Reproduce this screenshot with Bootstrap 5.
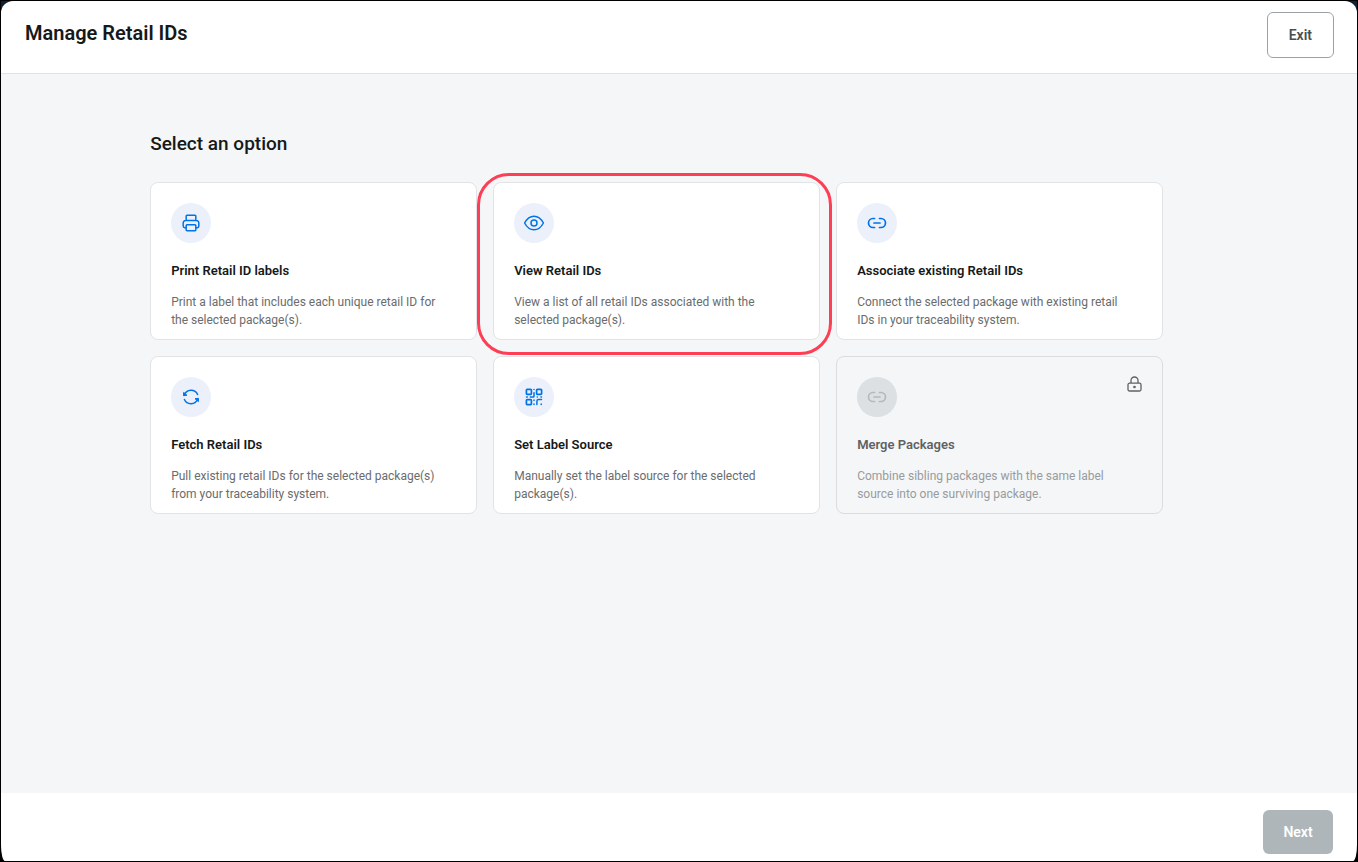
<!DOCTYPE html>
<html lang="en">
<head>
<meta charset="utf-8">
<meta name="viewport" content="width=device-width, initial-scale=1">
<title>Manage Retail IDs</title>
<link href="https://cdn.jsdelivr.net/npm/bootstrap@5.3.0/dist/css/bootstrap.min.css" rel="stylesheet">
<style>
  body { font-family: Roboto, "Liberation Sans", sans-serif; background: #0b2138; color: #161919; }
  .window-frame { border: 1px solid #000; background: linear-gradient(#0b2138 50%, #000 50%); }
  .sheet { background: #fff; border-radius: 12px 12px 4px 4px / 12px 12px 16px 16px; overflow: hidden; }
  .sheet-header { padding: 11px 23px 15px 24px; border-bottom: 1px solid #e0e2e3; }
  .sheet-title { font-size: 20px; font-weight: 600; line-height: 42px; }
  .sheet-body { background: #f4f6f8; padding: 56px 24px 56px 11%; }
  .sheet-footer { padding: 17px 24px 7px; }
  .option-area { max-width: 1013px; }
  .section-title { font-size: 19px; font-weight: 500; line-height: 28px; margin-bottom: 24px; }
  .btn-exit, .btn-next { font-size: 14px; font-weight: 600; border-radius: 6px; line-height: 20px; }
  .btn-exit { padding: 12px 21px; border: 1px solid #9aa2a6; color: #474f52; background: #fff; }
  .btn-next, .btn-next:disabled { min-width: 70px; padding: 12px 20px; border: 0; background: #aeb6ba; color: #fff; opacity: 1; }
  .option-card { padding: 20px 20px 10px; border: 1px solid #e1e4e6; border-radius: 8px; background: #fff; color: #161919; }
  .option-card:disabled { background: #f4f6f8; border-color: #dadddf; color: #5f6263; }
  .option-icon { width: 40px; height: 40px; background: #ebf0fa; color: #0073e6; }
  .option-icon svg { width: 24px; height: 24px; }
  .option-card:disabled .option-icon { background: #dce0e2; color: #b3b9bc; }
  .option-name { font-size: 13px; font-weight: 600; line-height: 22px; margin: 17px 0 11px; }
  .option-text { font-size: 12px; line-height: 18px; padding-right: 12px; color: #6a6c6d; }
  .option-card:disabled .option-text { color: #999b9c; }
  .lock-icon { top: 18px; right: 18px; width: 19px; height: 19px; color: #5f6263; }
  .highlighted::after { content: ""; position: absolute; inset: -10px -13px -16px -17px; border: 3px solid #fd3e55; border-radius: 32px; z-index: 2; pointer-events: none; }
  svg { fill: none; stroke: currentColor; stroke-width: 1.5; stroke-linecap: round; stroke-linejoin: round; }
</style>
</head>
<body>
<div class="window-frame min-vh-100 d-flex flex-column">
  <div class="sheet flex-grow-1 d-flex flex-column">
    <header class="sheet-header d-flex justify-content-between align-items-start">
      <h1 class="sheet-title mb-0">Manage Retail IDs</h1>
      <button type="button" class="btn btn-exit">Exit</button>
    </header>

    <main class="sheet-body flex-grow-1">
      <div class="option-area">
        <h2 class="section-title">Select an option</h2>
        <div class="row row-cols-1 row-cols-md-3 g-3">
          <div class="col">
            <button type="button" class="option-card w-100 h-100 text-start d-flex flex-column">
              <span class="option-icon rounded-circle d-flex align-items-center justify-content-center">
                <svg viewBox="0 0 24 24" aria-hidden="true"><path d="M7.2 9.5V5.100a.8.8 0 0 1 .8-.8h8a.8.8 0 0 1 .8.8v4.400M7.200 16.700H5.800a1.600 1.600 0 0 1-1.600-1.600V11.800a2.300 2.300 0 0 1 2.300-2.300h11a2.300 2.300 0 0 1 2.300 2.300v3.300a1.600 1.600 0 0 1-1.600 1.600h-1.400M8 13.700h8a.8.8 0 0 1 .8.8v4.400a.8.8 0 0 1-.8.8H8a.8.8 0 0 1-.8-.8v-4.400a.8.8 0 0 1 .8-.8z"/></svg>
              </span>
              <span class="option-name">Print Retail ID labels</span>
              <span class="option-text">Print a label that includes each unique retail ID for the selected package(s).</span>
            </button>
          </div>
          <div class="col">
            <button type="button" class="option-card highlighted position-relative w-100 h-100 text-start d-flex flex-column">
              <span class="option-icon rounded-circle d-flex align-items-center justify-content-center">
                <svg viewBox="0 0 24 24" aria-hidden="true"><path d="M2.600 12C5 7.500 8.400 5.200 12 5.200s7 2.300 9.400 6.800c-2.400 4.500-5.800 6.800-9.400 6.800S5 16.500 2.600 12z"/><circle cx="12" cy="12" r="3"/></svg>
              </span>
              <span class="option-name">View Retail IDs</span>
              <span class="option-text">View a list of all retail IDs associated with the selected package(s).</span>
            </button>
          </div>
          <div class="col">
            <button type="button" class="option-card w-100 h-100 text-start d-flex flex-column">
              <span class="option-icon rounded-circle d-flex align-items-center justify-content-center">
                <svg viewBox="0 0 24 24" aria-hidden="true"><path d="M9.500 16.500H8a4.500 4.500 0 0 1 0-9h1.500M14.500 7.500H16a4.500 4.500 0 0 1 0 9h-1.500M9 12h6" stroke-width="1.700"/></svg>
              </span>
              <span class="option-name">Associate existing Retail IDs</span>
              <span class="option-text">Connect the selected package with existing retail IDs in your traceability system.</span>
            </button>
          </div>
          <div class="col">
            <button type="button" class="option-card w-100 h-100 text-start d-flex flex-column">
              <span class="option-icon rounded-circle d-flex align-items-center justify-content-center">
                <svg viewBox="0 0 24 24" aria-hidden="true"><path d="M5.300 10A7.200 7.200 0 0 1 18.600 9.500M5.400 14.500a7.200 7.200 0 0 0 13.300-.5"/><path d="M4.600 7.800v2.900l3-.4zM19.400 16.200v-2.900l-3 .4z" fill="currentColor" stroke-width="1"/></svg>
              </span>
              <span class="option-name">Fetch Retail IDs</span>
              <span class="option-text">Pull existing retail IDs for the selected package(s) from your traceability system.</span>
            </button>
          </div>
          <div class="col">
            <button type="button" class="option-card w-100 h-100 text-start d-flex flex-column">
              <span class="option-icon rounded-circle d-flex align-items-center justify-content-center">
                <svg viewBox="0 0 24 24" aria-hidden="true"><path d="M5.200 4.400h3.400a.8.8 0 0 1 .8.8v3.400a.8.8 0 0 1-.8.8H5.200a.8.8 0 0 1-.8-.8V5.200a.8.8 0 0 1 .8-.8zM15.400 4.400h3.400a.8.8 0 0 1 .8.8v3.400a.8.8 0 0 1-.8.8h-3.400a.8.8 0 0 1-.8-.8V5.200a.8.8 0 0 1 .8-.8zM5.200 14.600h3.400a.8.8 0 0 1 .8.8v3.400a.8.8 0 0 1-.8.8H5.200a.8.8 0 0 1-.8-.8v-3.400a.8.8 0 0 1 .8-.8z" stroke-width="1.700"/><path d="M12 7.700v3.500a.8.8 0 0 1-.8.8H8.300M12 4.400v.1M4.500 12h.8M15.200 12h.1M19 12h.5M12 15v.5M12 19v.5M14.900 19.500v-3.300a1.600 1.600 0 0 1 1.600-1.600h3M19.200 19v.5"/></svg>
              </span>
              <span class="option-name">Set Label Source</span>
              <span class="option-text">Manually set the label source for the selected package(s).</span>
            </button>
          </div>
          <div class="col">
            <button type="button" class="option-card position-relative w-100 h-100 text-start d-flex flex-column" disabled>
              <span class="option-icon rounded-circle d-flex align-items-center justify-content-center">
                <svg viewBox="0 0 24 24" aria-hidden="true"><path d="M9.500 16.500H8a4.500 4.500 0 0 1 0-9h1.500M14.500 7.500H16a4.500 4.500 0 0 1 0 9h-1.500M9 12h6" stroke-width="1.700"/></svg>
              </span>
              <svg class="lock-icon position-absolute" viewBox="0 0 19 19" aria-hidden="true"><path d="M4.500 8.200h10a1.500 1.500 0 0 1 1.500 1.500v4.800a1.500 1.500 0 0 1-1.500 1.500h-10A1.500 1.500 0 0 1 3 14.500V9.700a1.500 1.500 0 0 1 1.500-1.500zM6 8.200V5.500a3.500 3.500 0 0 1 7 0v2.700" stroke-width="1.300"/><circle cx="9.500" cy="12" r=".6" fill="currentColor"/></svg>
              <span class="option-name">Merge Packages</span>
              <span class="option-text">Combine sibling packages with the same label source into one surviving package.</span>
            </button>
          </div>
        </div>
      </div>
    </main>

    <footer class="sheet-footer d-flex justify-content-end">
      <button type="button" class="btn btn-next" disabled>Next</button>
    </footer>
  </div>
</div>
<script src="https://cdn.jsdelivr.net/npm/bootstrap@5.3.0/dist/js/bootstrap.bundle.min.js"></script>
</body>
</html>
